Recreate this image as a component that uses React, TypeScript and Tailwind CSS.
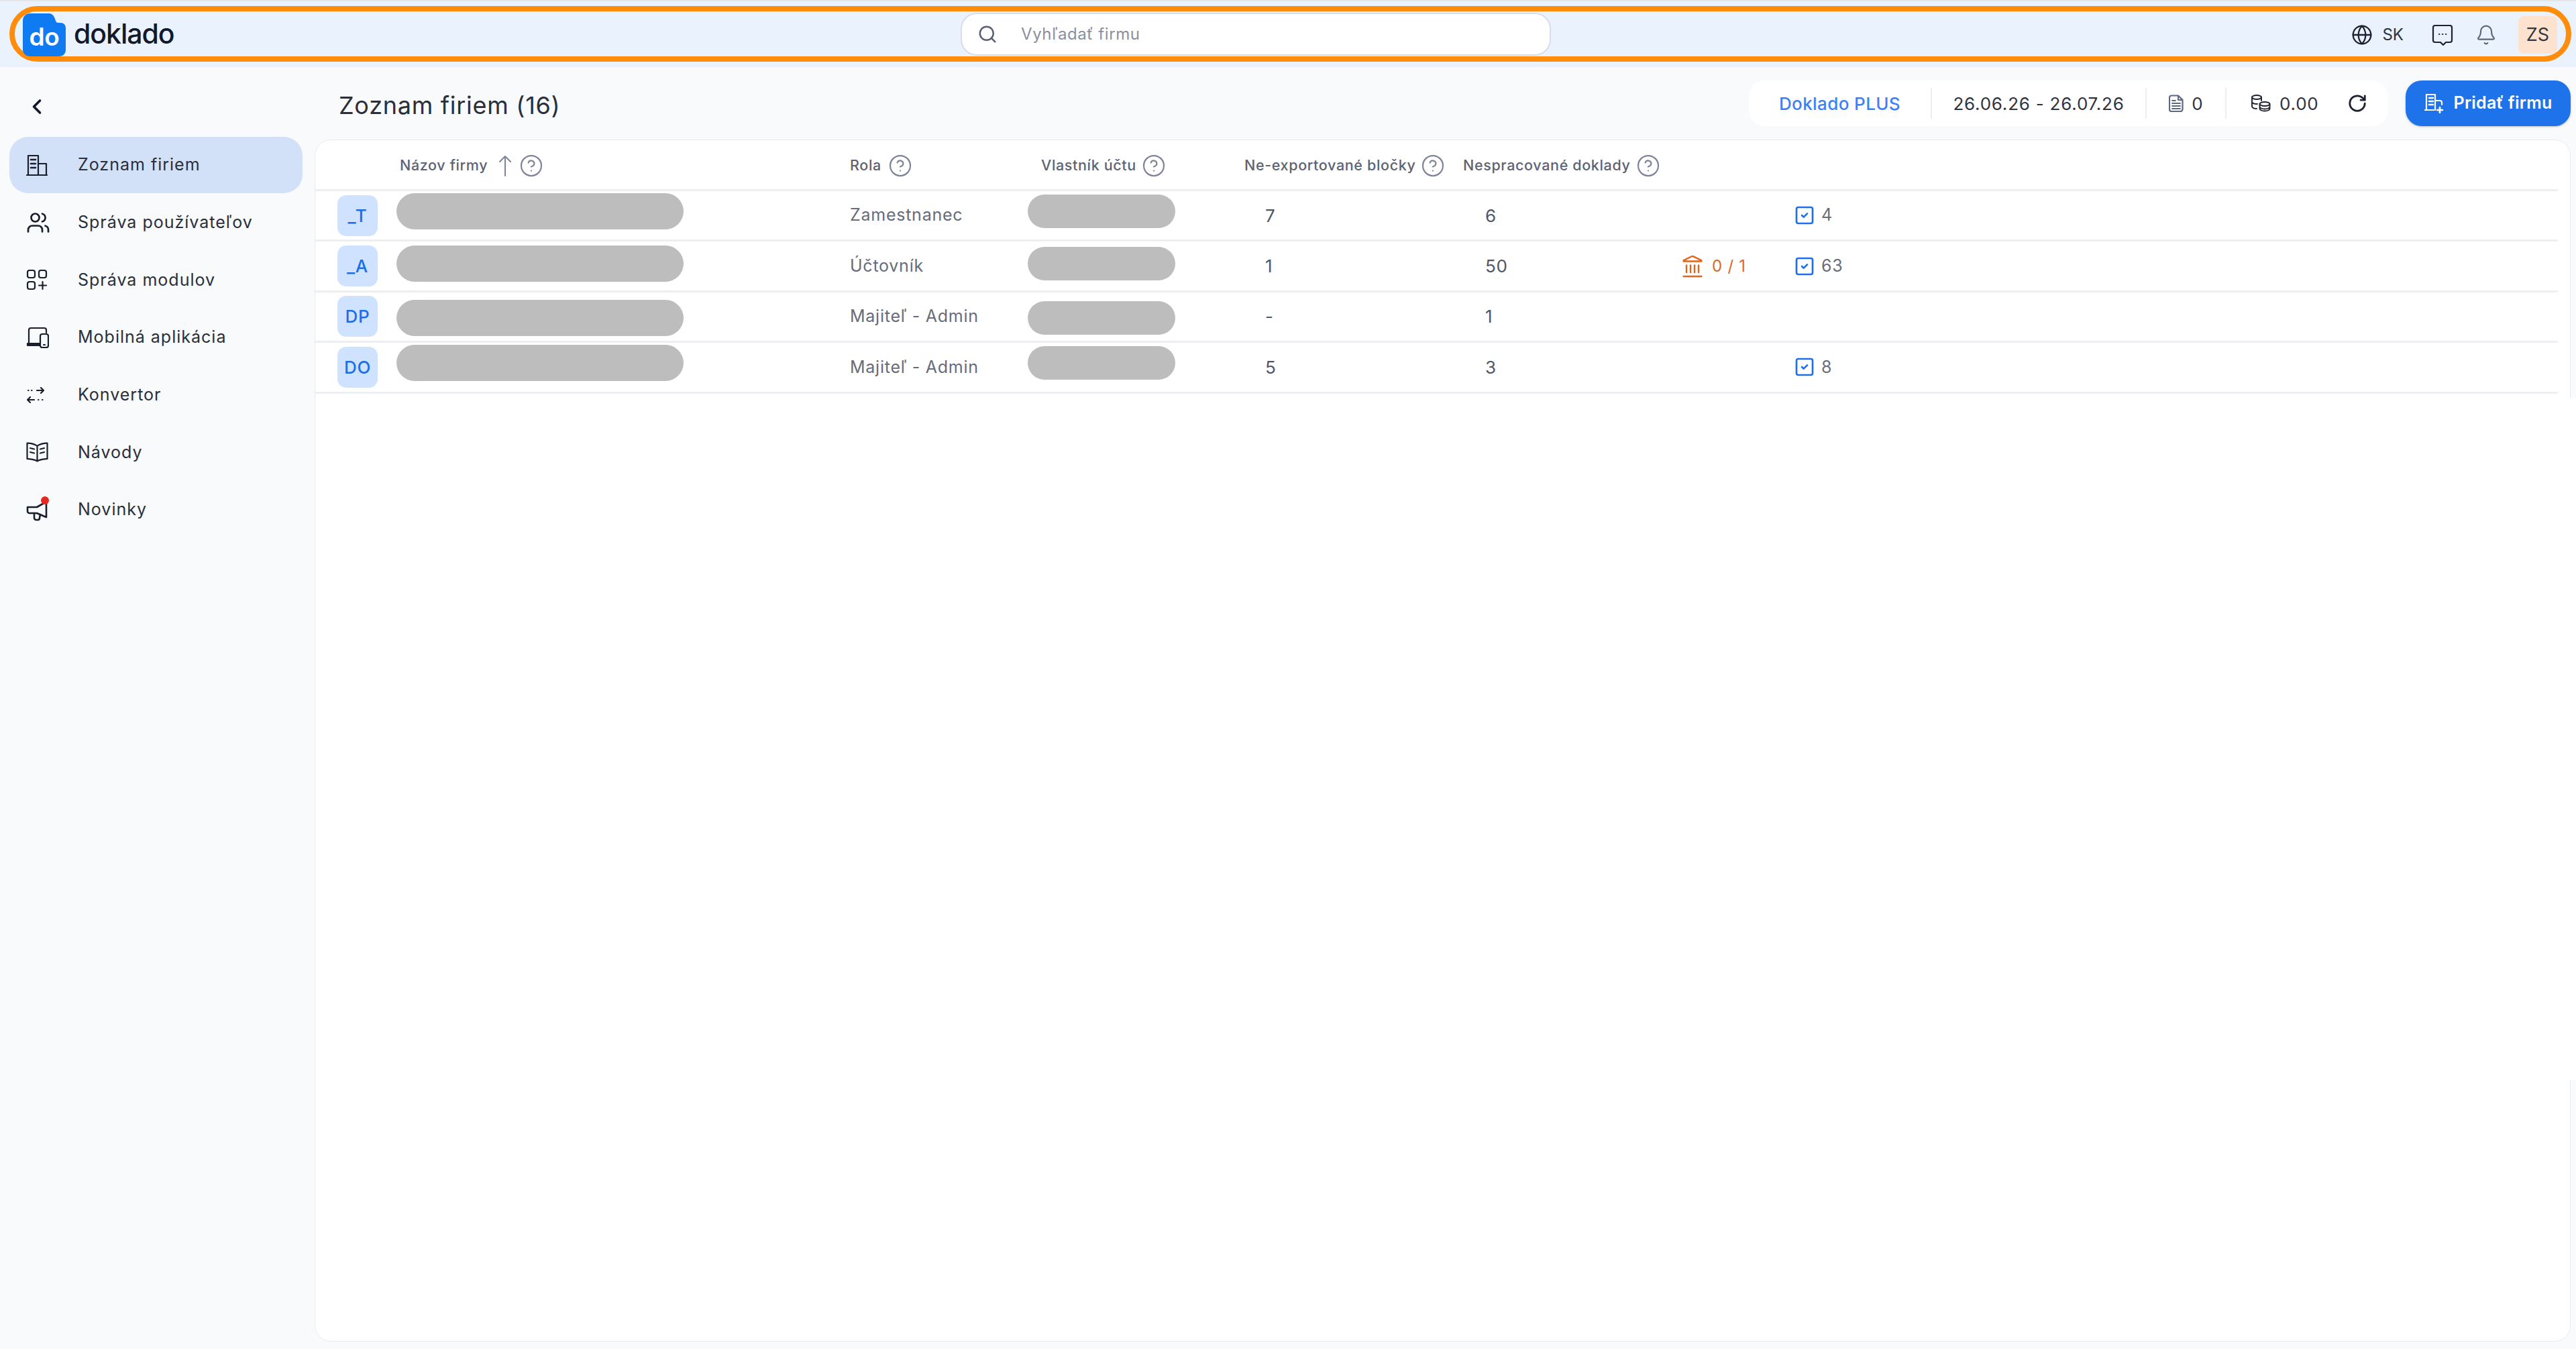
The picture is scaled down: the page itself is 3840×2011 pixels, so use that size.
import React from "react";
import { Bell, ChevronLeft, Globe, Search, CircleHelp, RotateCw, Users, Landmark, SquareCheck } from "lucide-react";

const S = ({ children, className, vb = "0 0 32 32", sw = 2.2 }: { children: React.ReactNode; className?: string; vb?: string; sw?: number }) => (
  <svg viewBox={vb} fill="none" stroke="currentColor" strokeWidth={sw} strokeLinecap="round" strokeLinejoin="round" className={className}>
    {children}
  </svg>
);

const BuildingIcon = () => (
  <S className="w-[32px] h-[32px]">
    <path d="M1 31h30M3 31V2h15v29M18 14h12v17" />
    <path d="M7 8h7M7 14h7M7 20h7" strokeWidth={2.6} />
  </S>
);
const ModulesIcon = () => (
  <S className="w-[32px] h-[32px]">
    <rect x="2" y="2" width="11" height="11" rx="3" />
    <rect x="19" y="2" width="11" height="11" rx="3" />
    <rect x="2" y="19" width="11" height="11" rx="3" />
    <path d="M24.5 19v11M19 24.5h11" />
  </S>
);
const DevicesIcon = () => (
  <S className="w-[34px] h-[32px]" vb="0 0 34 32">
    <path d="M4 25V5a3 3 0 0 1 3-3h20a3 3 0 0 1 3 3v4M2 27h18" />
    <path d="M2 25h18v3H2z" fill="currentColor" />
    <rect x="21" y="11" width="12" height="20" rx="3" />
    <path d="M26 27h2" />
  </S>
);
const ConvertIcon = () => (
  <S className="w-[28px] h-[24px]" vb="0 0 28 24">
    <path d="M16 5h10M22 1l4 4-4 4M12 19H2M6 15l-4 4 4 4" />
    <path d="M3 5h.5M8 5h.5M18 19h.5M24 19h.5" />
  </S>
);
const BookIcon = () => (
  <S className="w-[33px] h-[30px]" vb="0 0 33 30">
    <path d="M16.5 6C12 2 7 2 1.5 1.5v23.5c5.5.5 10.5.5 15 3.5 4.5-3 9.5-3 15-3.5V1.500C26 2 21 2 16.5 6zM16.5 6v22" />
    <path d="M6 9l6 1.5M6 15l6 1.5M27 9l-6 1.5M27 15l-6 1.5" />
  </S>
);
const MegaphoneIcon = () => (
  <div className="relative w-[34px] h-[34px]">
    <S className="w-[34px] h-[34px]" vb="0 0 34 34" sw={2.6}>
      <path d="M2 13h14l14-8v23l-14-6H5a3 3 0 0 1-3-3z" />
      <path d="M12 22v7a3 3 0 0 0 3 3h3a3 3 0 0 0 2-3l1-5" />
    </S>
    <div className="absolute right-[0px] top-[-3px] w-[12px] h-[12px] rounded-full bg-[#e5281f]" />
  </div>
);
const ChatIcon = () => (
  <S className="w-[32px] h-[32px] text-[#1d2130]">
    <path d="M5 2h22a3 3 0 0 1 3 3v19a3 3 0 0 1-3 3h-6l-4 4-4-4H5a3 3 0 0 1-3-3V5a3 3 0 0 1 3-3z" />
    <path d="M11 15h.3M16 15h.3M21 15h.3" />
  </S>
);
const DocIcon = () => (
  <S className="w-[22px] h-[26px] text-[#5b6787]" vb="0 0 22 26">
    <path d="M4 1.5h10l6.5 6.5v14a3 3 0 0 1-3 3H4a3 3 0 0 1-3-3V4.5a3 3 0 0 1 3-3z" />
    <path d="M5 9h5M5 13h12M5 17h12M5 21h12M14 2v6h6" strokeWidth={1.9} />
  </S>
);
const CoinsIcon = () => (
  <S className="w-[30px] h-[26px] text-[#1d2130]" vb="0 0 30 26" sw={1.9}>
    <ellipse cx="9" cy="4" rx="7" ry="3" />
    <path d="M2 4v14c0 1.5 3 3 7 3M2 11c0 1.5 3 3 8 3M16 4v5" />
    <ellipse cx="21" cy="14" rx="7.5" ry="3" />
    <path d="M13.5 14v7c0 2 3.5 3.5 7.5 3.5s7.5-1.500 7.5-3.500v-7M13.5 18c0 2 3.5 3.5 7.5 3.500s7.500-1.500 7.500-3.500" />
  </S>
);
const AddBuildingIcon = () => (
  <S className="w-[30px] h-[30px] text-white" vb="0 0 30 30">
    <path d="M1 25h13M3 25V2h13v23M16 11h7a3 3 0 0 1 3 3v3" />
    <path d="M7 7h6M7 12h6M7 17h6" strokeWidth={2.6} />
    <path d="M23 21v8M19 25h8" strokeWidth={2.6} />
  </S>
);
const SortArrow = () => (
  <S className="w-[20px] h-[32px] text-[#7d8499]" vb="0 0 20 32" sw={2}>
    <path d="M10 31V2M2 10l8-8 8 8" />
  </S>
);
const Logo = () => (
  <div className="relative mt-[3px] w-[64px] h-[64px] shrink-0 flex items-center justify-center">
    <svg viewBox="0 0 64 64" className="absolute inset-0 w-[64px] h-[64px]">
      <path d="M11 0h28c6 0 8 5 10 11 1 3 3 3 5 3h2c5 0 8 3 8 8v32c0 6-4 10-10 10H11C5 64 0 60 0 54V11C0 4 5 0 11 0z" fill="#0f7bf2" />
    </svg>
    <span className="relative mt-[4px] text-[37px] font-semibold leading-none text-white tracking-[-0.01em]">do</span>
  </div>
);

const Help = () => <CircleHelp className="w-[36px] h-[36px] text-[#7d8499] shrink-0" strokeWidth={1.5} />;

const nav: { label: string; icon: React.ReactNode; active?: boolean }[] = [
  { label: "Zoznam firiem", icon: <BuildingIcon />, active: true },
  { label: "Správa používateľov", icon: <Users className="w-[36px] h-[36px]" strokeWidth={1.8} /> },
  { label: "Správa modulov", icon: <ModulesIcon /> },
  { label: "Mobilná aplikácia", icon: <DevicesIcon /> },
  { label: "Konvertor", icon: <ConvertIcon /> },
  { label: "Návody", icon: <BookIcon /> },
  { label: "Novinky", icon: <MegaphoneIcon /> },
];

const rows = [
  { badge: "_T", role: "Zamestnanec", blocks: "7", docs: "6", tasks: "4", bar: "-mt-[12px]", owner: "-mt-[12px]" },
  { badge: "_A", role: "Účtovník", blocks: "1", docs: "50", tasks: "63", bank: "0 / 1", bar: "-mt-[7px]", owner: "-mt-[8px]" },
  { badge: "DP", role: "Majiteľ - Admin", blocks: "-", docs: "1", bar: "mt-[4px]", owner: "mt-[4px]" },
  { badge: "DO", role: "Majiteľ - Admin", blocks: "5", docs: "3", tasks: "8", bar: "-mt-[12px]", owner: "-mt-[12px]" },
];

export default function App() {
  return (
    <div className="relative w-[3840px] h-[2011px] overflow-hidden flex flex-col bg-[#f8fafc] font-['Inter','Noto_Sans',sans-serif] text-[#2a2f3a]">
      <header className="h-[100px] shrink-0 bg-[#e9f2fd] border-t-2 border-[#e6e6ea] pl-[14px] pr-[7px] pt-[7px]">
        <div className="relative h-[83px] rounded-[42px] border-[8px] border-[#ff8c0a] flex items-center pl-[12px] pr-[13px]">
          <Logo />
          <span className="ml-[12px] text-[41px] font-medium leading-none tracking-[-0.025em] text-[#14182b]">doklado</span>
          <div className="absolute left-[1410px] top-[2px] w-[880px] h-[64px] rounded-[24px] bg-white border-2 border-[#d8dde8] flex items-center pl-[23px]">
            <Search className="w-[30px] h-[30px] text-[#5b6075]" strokeWidth={2} />
            <span className="ml-[35px] text-[24px] text-[#8a8fa0] tracking-[0.025em]">Vyhľadať firmu</span>
          </div>
          <div className="ml-auto mt-[3px] flex items-center text-[#2d3140]">
            <Globe className="w-[32px] h-[32px] text-[#1d2130]" strokeWidth={1.7} />
            <span className="ml-[14px] text-[24px]">SK</span>
            <div className="ml-[42px]"><ChatIcon /></div>
            <Bell className="ml-[33px] w-[32px] h-[32px] text-[#5e6678]" strokeWidth={1.6} />
            <div className="ml-[32px] w-[58px] h-[56px] rounded-[8px] bg-[#fde3cf] flex items-center justify-center text-[27px] text-[#35353c]">ZS</div>
          </div>
        </div>
      </header>

      <div className="flex-1 flex min-h-0">
        <aside className="w-[469px] shrink-0 pl-[14px] pr-[18px] flex flex-col">
          <div className="h-[104px] pl-[23px] pt-[14px] flex items-center">
            <ChevronLeft className="w-[36px] h-[36px] text-[#14182b]" strokeWidth={2.4} />
          </div>
          <nav className="flex flex-col gap-[1.7px]">
            {nav.map((n) => (
              <div key={n.label} className={`h-[84px] rounded-[28px] flex items-center ${n.active ? "bg-[#d3e1f8]" : ""}`}>
                <div className="w-[102px] pl-[25px] flex items-center text-[#1a1e2b]">{n.icon}</div>
                <span className="text-[25px] tracking-[0.04em] text-[#2a2f3a]">{n.label}</span>
              </div>
            ))}
          </nav>
        </aside>

        <main className="flex-1 min-w-0 flex flex-col pr-[8px] pb-[11px]">
          <div className="h-[108px] shrink-0 flex items-center">
            <h1 className="ml-[36px] mt-[6px] text-[36px] font-normal tracking-[0.02em] text-[#2a2f3a]">Zoznam firiem (16)</h1>
            <div className="ml-auto h-[68px] w-[953px] rounded-[24px] bg-white flex items-center text-[26px] text-[#2f3340]">
              <div className="w-[273px] h-[46px] flex items-center justify-center border-r-2 border-[#eceef2] text-[#3b82f6] font-medium tracking-[0.015em]">Doklado PLUS</div>
              <div className="w-[320px] h-[46px] flex items-center justify-center border-r-2 border-[#eceef2] tracking-[0.03em]">26.06.26 - 26.07.26</div>
              <div className="w-[119px] h-[46px] flex items-center justify-center gap-[12px] border-r-2 border-[#eceef2]"><DocIcon /><span>0</span></div>
              <div className="ml-[36px] flex items-center gap-[13px]"><CoinsIcon /><span className="tracking-[0.03em]">0.00</span></div>
              <RotateCw className="ml-[42px] w-[30px] h-[30px] text-[#1d2130]" strokeWidth={2.2} />
            </div>
            <button className="ml-[26px] h-[68px] w-[246px] rounded-[24px] bg-[#1f73ea] shadow-[0_1px_3px_rgba(0,0,0,0.25)] text-white flex items-center justify-center gap-[14px] text-[25px] font-semibold tracking-[0.01em]">
              <AddBuildingIcon />
              Pridať firmu
            </button>
          </div>

          <section className="relative flex-1 min-h-0 bg-white rounded-[24px] border border-[#e9ebef] overflow-hidden">
            <div className="h-[73px] pt-[2px] pl-[126px] grid grid-cols-[671px_285px_303px_326px_1fr] items-center text-[21.5px] font-medium tracking-[0.03em] text-[#5c6375]">
              <div className="flex items-center"><span>Názov firmy</span><span className="ml-[16px]"><SortArrow /></span><span className="ml-[11px]"><Help /></span></div>
              <div className="flex items-center gap-[10px]"><span>Rola</span><Help /></div>
              <div className="flex items-center gap-[8px]"><span>Vlastník účtu</span><Help /></div>
              <div className="flex items-center gap-[8px]"><span>Ne-exportované bločky</span><Help /></div>
              <div className="flex items-center gap-[8px]"><span>Nespracované doklady</span><Help /></div>
            </div>
            <div className="mr-[18px]">
              {rows.map((r) => (
                <div key={r.badge} className="h-[75.4px] border-t-[3px] border-[#eeeff2] grid grid-cols-[121px_676px_265px_354px_328px_296px_168px_1fr] items-center text-[25px] tracking-[0.03em] text-[#666c7c]">
                  <div className="pl-[33px]">
                    <div className="w-[60px] h-[61px] rounded-[13px] bg-[#cfe2ff] flex items-center justify-center text-[#1a6fe8] text-[26px] font-medium">{r.badge}</div>
                  </div>
                  <div className={`w-[428px] h-[54px] rounded-[27px] bg-[#bdbdbd] ${r.bar}`} />
                  <div>{r.role}</div>
                  <div className={`w-[220px] h-[50px] rounded-[25px] bg-[#bdbdbd] ${r.owner}`} />
                  <div className="text-[26px] text-[#4f5566]">{r.blocks}</div>
                  <div className="text-[26px] text-[#4f5566]">{r.docs}</div>
                  <div className="-ml-[5px] flex items-center gap-[11px] text-[24px] text-[#e0661f]">
                    {r.bank && <Landmark className="w-[36px] h-[36px]" strokeWidth={1.6} />}
                    {r.bank && <span>{r.bank}</span>}
                  </div>
                  <div className="-ml-[4px] flex items-center gap-[9px]">
                    {r.tasks && <SquareCheck className="w-[32px] h-[32px] text-[#1f6fe8]" strokeWidth={2} />}
                    {r.tasks && <span>{r.tasks}</span>}
                  </div>
                </div>
              ))}
              <div className="h-[8px] border-t-[3px] border-[#eeeff2] overflow-hidden">
                <div className="ml-[40px] mt-[5px] w-[50px] h-[20px] rounded-[8px] bg-[#e2edff]" />
              </div>
            </div>
          </section>
        </main>
      </div>
      <div className="absolute right-0 top-[593px] w-[9px] h-[1017px] bg-white" />
    </div>
  );
}
